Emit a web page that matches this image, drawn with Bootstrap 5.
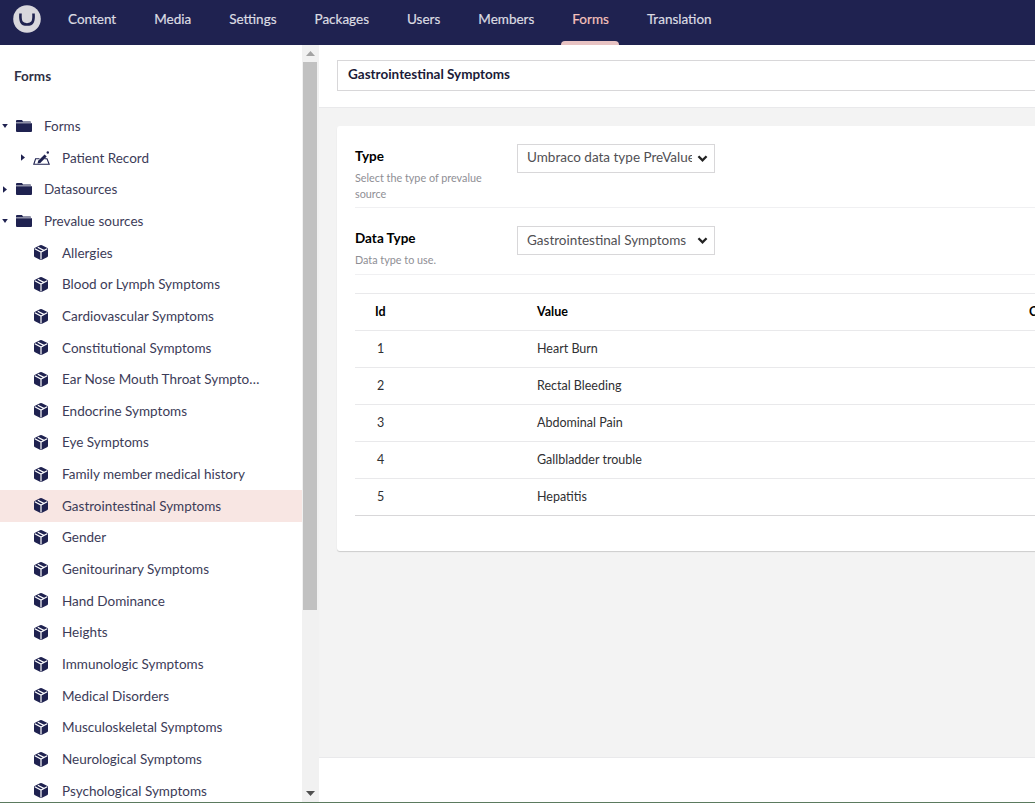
<!DOCTYPE html>
<html lang="en"><head><meta charset="utf-8"><title>Forms</title>
<link href="https://cdn.jsdelivr.net/npm/bootstrap@5.3.0/dist/css/bootstrap.min.css" rel="stylesheet">
<style>
html,body{height:100%;overflow:hidden}
body{font-family:Lato,"Liberation Sans",sans-serif;font-size:13.5px;color:#1f2250;background:#fff}
.app-shell{height:803px;border-bottom:1px solid #5b7a5e}
.top-bar{height:45px;background:#1f2250;flex:none}
.logo-wrap{width:49px;flex:none}
.top-link{position:relative;color:#dcdce2;font-size:13.5px;padding:0 19px;line-height:38px;height:45px;text-decoration:none;-webkit-text-stroke:.2px}
.top-link.is-on{color:#f5c1bc}
.top-link.is-on::after{content:"";position:absolute;left:8px;right:9px;bottom:0;height:4px;background:#e8c3c3;border-radius:4px 4px 0 0}
.side-pane{width:319px;flex:none;overflow:hidden}
.side-tree{width:302px;flex:none}
.side-title{height:65.4px;padding:21px 14px 0;font-weight:700;font-size:13.5px;color:#303045}
.tree-row{height:31.65px;color:#3c3c58;white-space:nowrap}
.tree-row.is-sel{background:#f8e6e3}
.tree-arrow{width:16px;flex:none;display:flex;justify-content:center}
.lvl-0 .tree-arrow{margin-left:-3px}
.lvl-0 .tree-label{margin-left:12px}
.lvl-0 svg.nodeic{margin-left:3px}
.lvl-1{padding-left:15px}
.lvl-1 .tree-label{margin-left:14px}
.lvl-1 svg.ic-cube{margin-left:3px}
.lvl-1 svg.ic-form{margin-left:2px;margin-right:-2px}
svg.nodeic{flex:none;fill:#1f2250}
.fake-bar{width:17px;background:#f1f1f1;flex:none}
.bar-btn{height:17px;flex:none}
.bar-thumb{height:548px;width:14px;margin-left:1px;background:#c1c1c1;flex:none}
.main-pane{min-width:0;flex:1 1 0;overflow:hidden;background:#f3f3f3}
.main-head{height:63px;background:#fff;border-bottom:1px solid #e9e9eb;padding:15px 0 0 18px;flex:none}
.name-input{width:900px;height:31px;border:1px solid #d8d7d9;padding:0 10px;line-height:26px;font-weight:700;color:#1b1b38;font-size:13.5px}
.main-body{padding:18px 0 0 18px;flex:1 1 0}
.form-panel{width:900px;height:425px;background:#fff;border-radius:3px;box-shadow:0 1px 1px rgba(0,0,0,.16);padding:18px 18px 0}
.prop-row{display:flex;border-bottom:1px solid #f0f0f2}
.prop-a{height:64px;margin-bottom:18px}
.prop-b{height:49px;margin-bottom:18px}
.prop-label{width:162px;flex:none;padding-right:20px}
.prop-label strong{display:block;color:#000;font-size:13.5px;line-height:24px}
.prop-b .prop-label strong{line-height:25px}
.prop-label span{display:block;font-size:10.8px;line-height:16px;color:#8e8e94;margin-top:2px}
.prop-b .prop-label span{margin-top:1px}
.prop-select{width:198px;height:29px;font-family:inherit;font-size:13.5px;line-height:25px;color:#515054;border:1px solid #d8d7d9;border-radius:0;padding:0 22px 2px 9px;background-position:right 6px center;background-size:11px 9px;background-image:url("data:image/svg+xml,%3csvg xmlns='http://www.w3.org/2000/svg' viewBox='0 0 12 10'%3e%3cpath fill='none' stroke='%23222' stroke-width='2.6' d='M1.5 2.5 6 7l4.5-4.5'/%3e%3c/svg%3e")}
.prop-b .prop-select{padding-bottom:0}
.val-table{table-layout:fixed;width:100%;margin:0;border-top:1px solid #e9e9eb;border-bottom:1px solid #d8d7d9;color:#303033}
.val-table th,.val-table td{height:37px;padding:1px 20px 0;vertical-align:middle;border-bottom:1px solid #e9e9eb;font-size:12.5px;box-sizing:border-box}
.val-table th{color:#000;font-weight:700}
.val-table tr:last-child td{border-bottom:0}
.val-table td:first-child{padding-left:22px}
.main-foot{height:45px;background:#fff;border-top:1px solid #e9e9eb;flex:none}
</style></head>
<body>
<svg width="0" height="0" class="position-absolute">
<symbol id="ic-folder" viewBox="0 0 16 12"><path d="M1 0h5l1 1.400h7.400a1 1 0 0 1 .6.6v.4H0V1a1 1 0 0 1 1-1zM0 3.200h16V11a1 1 0 0 1-1 1H1a1 1 0 0 1-1-1z"/></symbol>
<symbol id="ic-cube" viewBox="0 0 14 15"><path d="M6 .3a2 2 0 0 1 2 0l5 2.500a1.500 1.500 0 0 1 1 1.400v6.600a1.500 1.500 0 0 1-1 1.400l-5 2.500a2 2 0 0 1-2 0l-5-2.500a1.500 1.500 0 0 1-1-1.400V4.200a1.500 1.500 0 0 1 1-1.400z"/><path d="M.8 3.800 7 7l6.200-3.200M7 7v7.500M3.800 2.200l6.400 3.400" fill="none" stroke="#fff" stroke-width="1.200"/></symbol>
<symbol id="ic-form" viewBox="0 0 17 14"><path d="M5 13.300H.8L2.600 7.800H6.500M11.500 7.800h2.500l2.200 5.500H5" fill="none" stroke="#1f2250" stroke-width="1.100"/><path d="M5.200 9.800 11.600 3.400l2.100 2.100-6.400 6.400-2.800.7z"/><circle cx="14.800" cy="1.500" r="1.200"/></symbol>
</svg>
<div class="app-shell d-flex flex-column">
 <nav class="top-bar d-flex align-items-start">
  <div class="logo-wrap d-flex ps-2"><svg width="38" height="38" viewBox="0 0 38 38" role="img" aria-label="Umbraco"><circle cx="19" cy="19" r="13.800" fill="#d8d7dd"/><path d="M12.500 13.500c-.5 8 .8 11 6.500 11s7-3 6.500-11" fill="none" stroke="#1f2250" stroke-width="2.600"/></svg></div>
  <a class="top-link" href="#">Content</a><a class="top-link" href="#">Media</a><a class="top-link" href="#">Settings</a><a class="top-link" href="#">Packages</a><a class="top-link" href="#">Users</a><a class="top-link" href="#">Members</a><a class="top-link is-on" href="#">Forms</a><a class="top-link" href="#">Translation</a>
 </nav>
 <div class="d-flex flex-grow-1" style="min-height:0">
  <aside class="side-pane d-flex">
   <div class="side-tree">
    <div class="side-title">Forms</div>
    <div id="tree"></div>
   </div>
   <div class="fake-bar d-flex flex-column">
    <div class="bar-btn d-flex align-items-center justify-content-center"><svg width="9" height="5" viewBox="0 0 9 5"><path d="M0 5 4.500 0 9 5z" fill="#a3a3a3"/></svg></div>
    <div class="bar-thumb"></div>
    <div class="flex-grow-1"></div>
    <div class="bar-btn d-flex align-items-center justify-content-center"><svg width="9" height="5" viewBox="0 0 9 5"><path d="M0 0h9L4.500 5z" fill="#505050"/></svg></div>
   </div>
  </aside>
  <main class="main-pane d-flex flex-column">
   <div class="main-head"><div class="name-input">Gastrointestinal Symptoms</div></div>
   <div class="main-body">
    <div class="form-panel">
     <div class="prop-row prop-a"><div class="prop-label"><strong>Type</strong><span>Select the type of prevalue source</span></div><div><select class="form-select prop-select"><option>Umbraco data type PreValues</option></select></div></div>
     <div class="prop-row prop-b"><div class="prop-label"><strong>Data Type</strong><span>Data type to use.</span></div><div><select class="form-select prop-select"><option>Gastrointestinal Symptoms</option></select></div></div>
     <table class="val-table"><colgroup><col style="width:162px"><col style="width:492px"><col></colgroup>
      <thead><tr><th>Id</th><th>Value</th><th>Caption</th></tr></thead>
      <tbody><tr><td>1</td><td>Heart Burn</td><td></td></tr><tr><td>2</td><td>Rectal Bleeding</td><td></td></tr><tr><td>3</td><td>Abdominal Pain</td><td></td></tr><tr><td>4</td><td>Gallbladder trouble</td><td></td></tr><tr><td>5</td><td>Hepatitis</td><td></td></tr></tbody>
     </table>
    </div>
   </div>
   <div class="main-foot"></div>
  </main>
 </div>
</div>
<script>
const rows=[[0,'d','f','Forms'],[1,'r','e','Patient Record'],[0,'r','f','Datasources'],[0,'d','f','Prevalue sources']];
["Allergies","Blood or Lymph Symptoms","Cardiovascular Symptoms","Constitutional Symptoms","Ear Nose Mouth Throat Sympto…","Endocrine Symptoms","Eye Symptoms","Family member medical history","Gastrointestinal Symptoms","Gender","Genitourinary Symptoms","Hand Dominance","Heights","Immunologic Symptoms","Medical Disorders","Musculoskeletal Symptoms","Neurological Symptoms","Psychological Symptoms"].forEach(t=>rows.push([1,'','c',t]));
const arrow={d:'<svg width="6" height="4" viewBox="0 0 7 5"><path d="M0 0h7L3.500 5z" fill="#1f2250"/></svg>',r:'<svg width="4" height="7" viewBox="0 0 5 8"><path d="M0 0l5 4-5 4z" fill="#1f2250"/></svg>','':''};
const ic={f:'<svg class="nodeic" width="16" height="12"><use href="#ic-folder"/></svg>',c:'<svg class="nodeic ic-cube" width="14" height="15"><use href="#ic-cube"/></svg>',e:'<svg class="nodeic ic-form" width="17" height="14"><use href="#ic-form"/></svg>'};
document.getElementById('tree').innerHTML=rows.map(r=>`<div class="tree-row d-flex align-items-center lvl-${r[0]}${r[3]==='Gastrointestinal Symptoms'?' is-sel':''}"><span class="tree-arrow">${arrow[r[1]]}</span>${ic[r[2]]}<span class="tree-label">${r[3]}</span></div>`).join('');
</script>
<script src="https://cdn.jsdelivr.net/npm/bootstrap@5.3.0/dist/js/bootstrap.bundle.min.js"></script>
</body></html>
